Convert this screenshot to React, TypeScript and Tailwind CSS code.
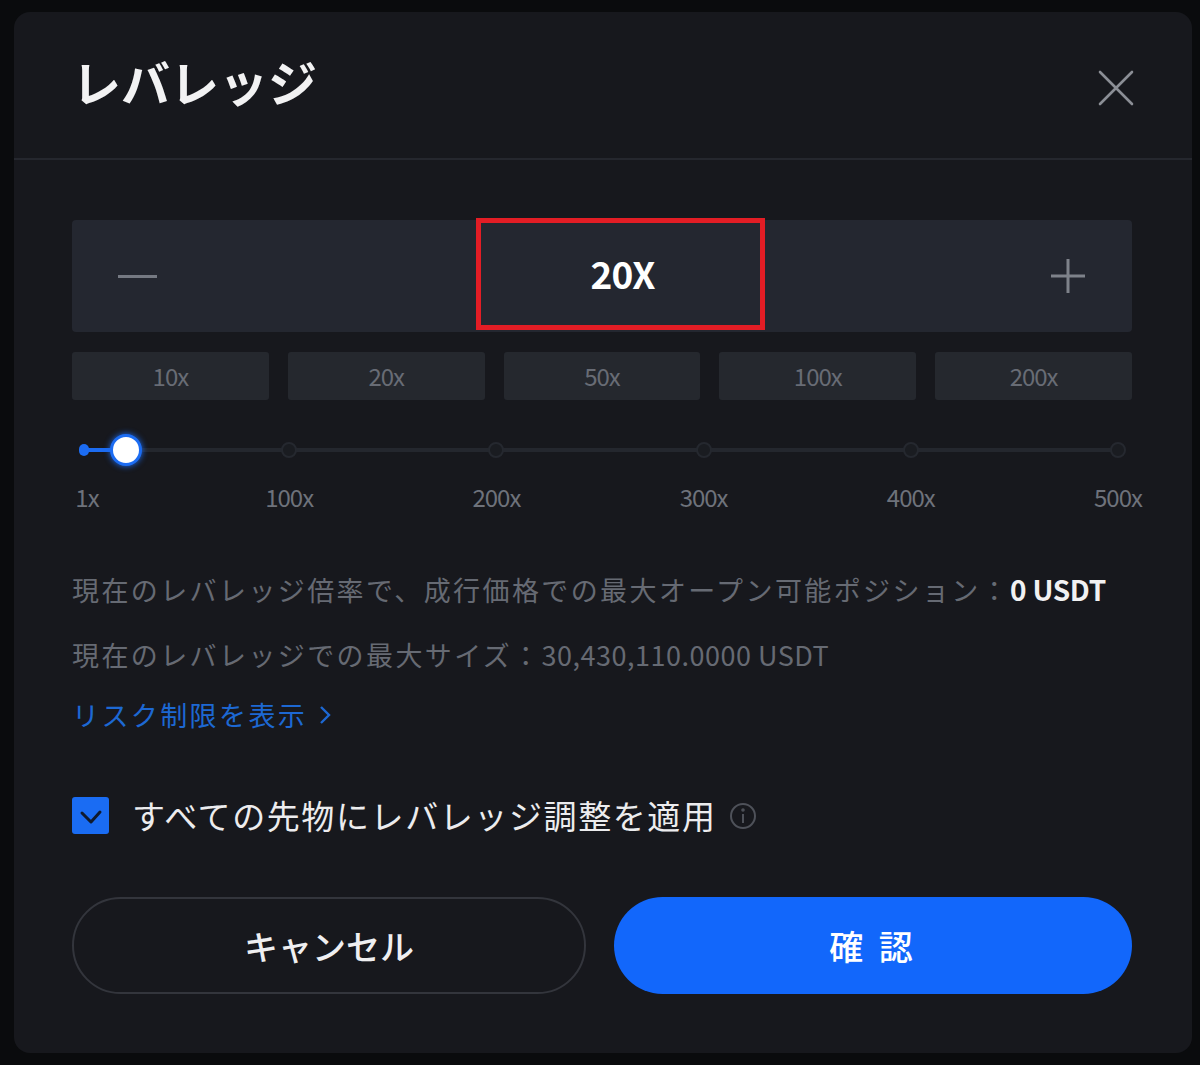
import React from "react";

const presets = ["10x", "20x", "50x", "100x", "200x"];
const marks = ["1x", "100x", "200x", "300x", "400x", "500x"];

const App = () => {
  return (
    <div
      className="w-[1200px] h-[1065px] bg-[#0a0b0d] pt-[12px] pl-[14px]"
      style={{ fontFamily: "'Noto Sans CJK JP', 'Noto Sans', sans-serif" }}
    >
      <div className="w-[1178px] h-[1041px] bg-[#17181d] rounded-[16px] flex flex-col">
        {/* header */}
        <div className="h-[148px] border-b-2 border-[#25272e] flex items-center justify-between pl-[58px] pr-[56px]">
          <h1 className="text-[49px] font-bold text-[#f2f2f3] tracking-[0px] -mt-[8px]">レバレッジ</h1>
          <button className="w-[40px] h-[40px] flex items-center justify-center mt-[6px]">
            <svg width="36" height="36" viewBox="0 0 36 36" fill="none" stroke="#8b8e95" strokeWidth="2.6" strokeLinecap="round">
              <path d="M2 2L34 34M34 2L2 34" />
            </svg>
          </button>
        </div>

        <div className="pl-[58px] pr-[60px] pt-[60px] flex flex-col">
          {/* stepper */}
          <div className="h-[112px] bg-[#242730] rounded-[4px] flex items-stretch">
            <div className="w-[404px] flex items-center pl-[46px]">
              <div className="w-[39px] h-[3px] bg-[#757982]" />
            </div>
            <div className="w-[289px] border-[5px] border-[#e31d25] -mt-[2px] mb-[2px] flex items-center justify-center">
              <span className="text-[37px] font-bold text-white tracking-[-1px] ml-[4px]">20X</span>
            </div>
            <div className="flex-1 flex items-center justify-end pr-[47px]">
              <svg width="34" height="34" viewBox="0 0 34 34" stroke="#7e828a" strokeWidth="3">
                <path d="M17 0V34M0 17H34" />
              </svg>
            </div>
          </div>

          {/* presets */}
          <div className="mt-[20px] flex gap-[19px]">
            {presets.map((p) => (
              <div
                key={p}
                className="flex-1 h-[48px] bg-[#25282e] rounded-[3px] flex items-center justify-center text-[24px] text-[#686c75] tracking-[-1px]"
              >
                {p}
              </div>
            ))}
          </div>

          {/* slider */}
          <div className="relative mt-[34px] h-[84px] ml-[10px] w-[1036px]">
            <div className="absolute left-0 right-0 top-[14px] h-[4px] bg-[#24272e] rounded-full" />
            <div className="absolute left-0 w-[44px] top-[14px] h-[4px] bg-[#1c6cf2] rounded-full" />
            <div className="absolute left-[-3px] top-[10px] w-[10px] h-[12px] bg-[#1c6cf2] rounded-full" />
            {[1, 2, 3, 4, 5].map((i) => (
              <div
                key={i}
                className="absolute top-[8px] w-[16px] h-[16px] -ml-[8px] rounded-full bg-[#1a1c21] border-2 border-[#25282f]"
                style={{ left: `${i * 20}%` }}
              />
            ))}
            <div className="absolute left-[28px] top-[0px] w-[32px] h-[32px] rounded-full bg-white border-[3px] border-[#1c6cf2] shadow-[0_0_6px_#1c6cf2]" />
            {marks.map((m, i) => (
              <span
                key={m}
                className="absolute top-[51px] text-[24px] leading-none text-[#6e727b] tracking-[-1px] -translate-x-1/2"
                style={{ left: i === 0 ? "5px" : `${i * 20}%` }}
              >
                {m}
              </span>
            ))}
          </div>

          {/* info */}
          <div className="mt-[51px] flex flex-col text-[27px] text-[#666a73] tracking-[2.4px]">
            <p className="leading-[40px] whitespace-nowrap">
              現在のレバレッジ倍率で、成行価格での最大オープン可能ポジション：
              <span className="text-[#f1f1f2] text-[28px] font-bold tracking-[-0.3px]">0 USDT</span>
            </p>
            <p className="leading-[40px] mt-[25px]">
              現在のレバレッジでの最大サイズ：<span className="tracking-[0.5px]">30,430,110.0000 USDT</span>
            </p>
            <p className="leading-[40px] mt-[20px] text-[#1d68d3] flex items-center gap-[12px]">
              リスク制限を表示
              <svg width="12" height="20" viewBox="0 0 12 20" fill="none" stroke="#1d68d3" strokeWidth="2.4">
                <path d="M2 2L10 10L2 18" />
              </svg>
            </p>
          </div>

          {/* checkbox */}
          <div className="mt-[56px] flex items-center">
            <div className="w-[37px] h-[37px] bg-[#1a6cf3] rounded-[3px] flex items-center justify-center">
              <svg width="24" height="18" viewBox="0 0 24 18" fill="none" stroke="#0f1a2e" strokeWidth="3" strokeLinecap="round" strokeLinejoin="round">
                <path d="M3 6L12 15L21 5" />
              </svg>
            </div>
            <span className="ml-[23px] text-[33px] text-[#ececee] tracking-[1.6px]">すべての先物にレバレッジ調整を適用</span>
            <svg className="ml-[12px]" width="28" height="28" viewBox="0 0 28 28" fill="none" stroke="#4e5159" strokeWidth="2">
              <circle cx="14" cy="14" r="12" />
              <path d="M14 12V21" />
              <circle cx="14" cy="8" r="0.8" fill="#4e5159" />
            </svg>
          </div>

          {/* actions */}
          <div className="mt-[56px] flex gap-[28px]">
            <button className="w-[514px] h-[97px] rounded-full border-2 border-[#33353c] text-[34px] font-medium text-[#efeff1]">
              キャンセル
            </button>
            <button className="flex-1 h-[97px] rounded-full bg-[#1267fb] text-[34px] font-medium text-white tracking-[4px]">
              確 認
            </button>
          </div>
        </div>
      </div>
    </div>
  );
};

export default App;
